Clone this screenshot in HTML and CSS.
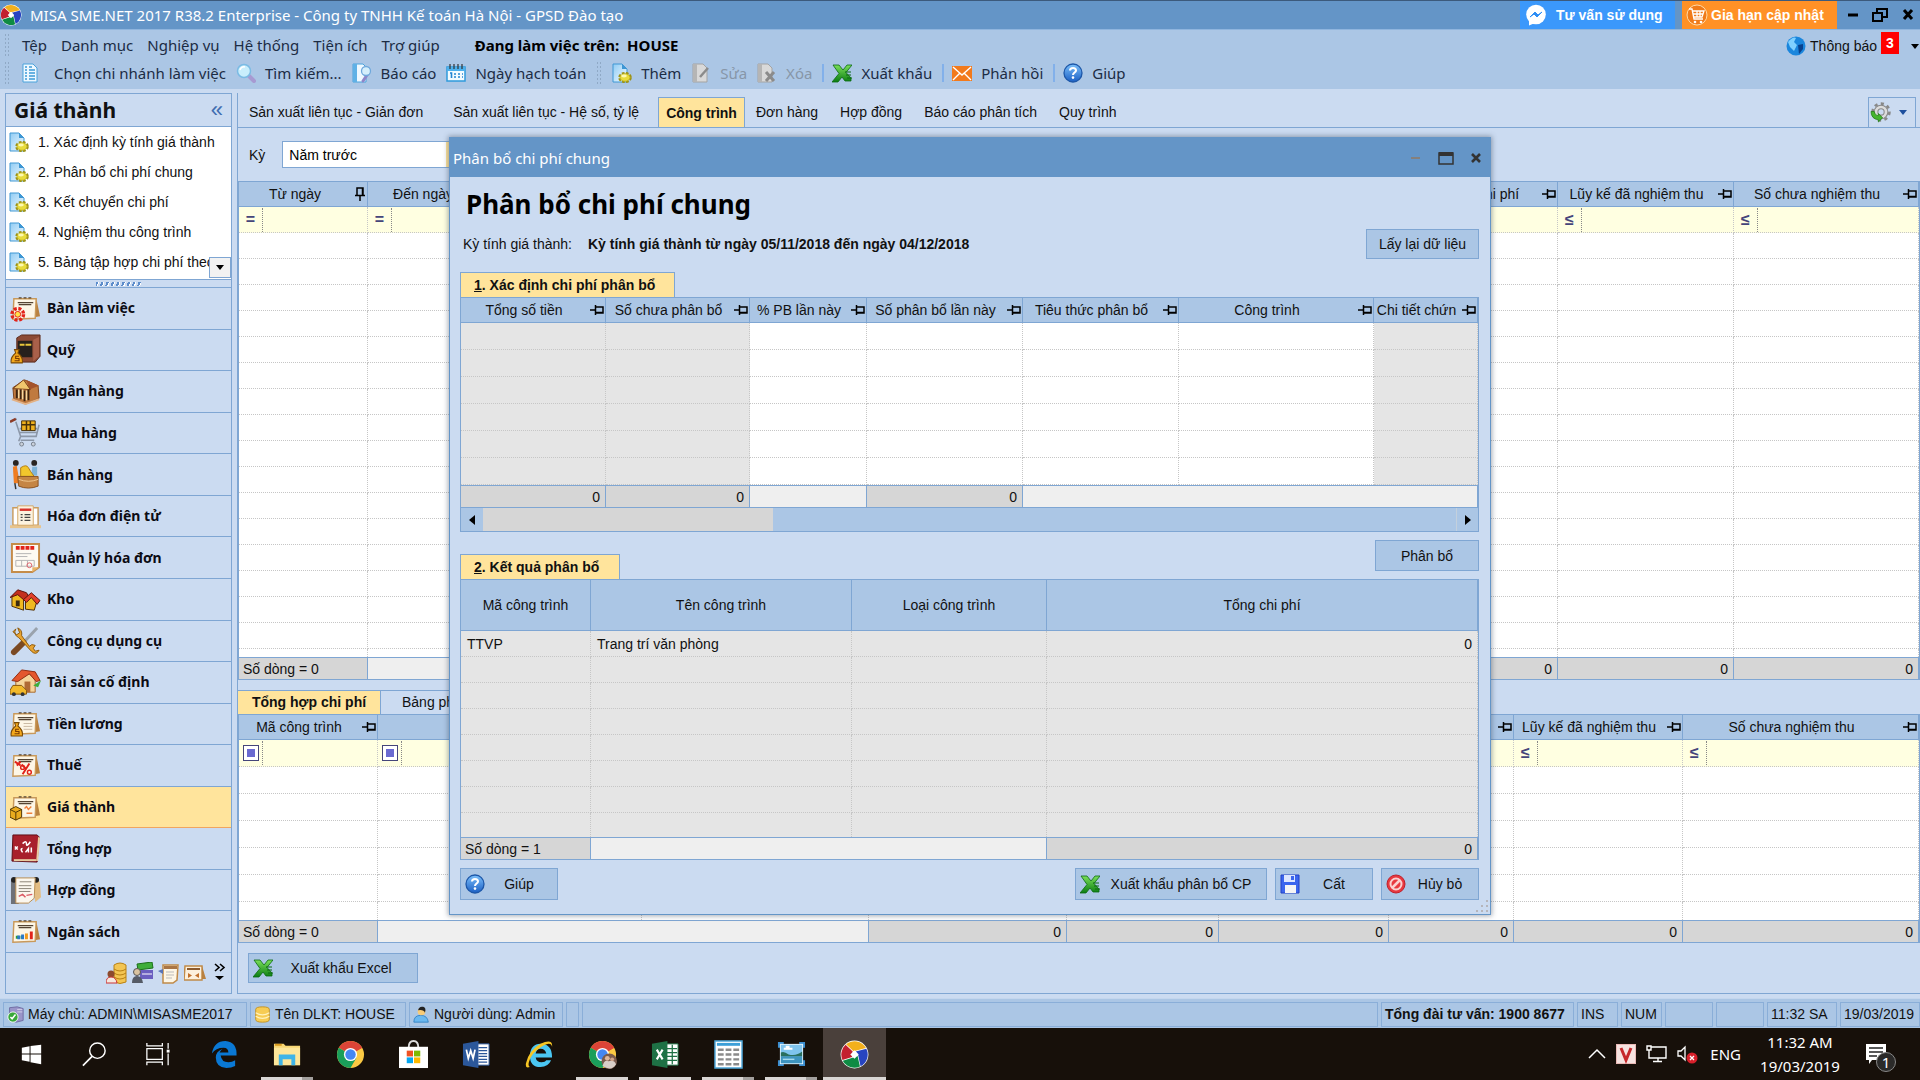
FILE: index.html
```html
<!DOCTYPE html>
<html lang="vi">
<head>
<meta charset="utf-8">
<title>MISA SME.NET 2017</title>
<link rel="stylesheet" href="styles.css">
</head>
<body>
<svg class="defs" aria-hidden="true">
  <defs>
    <linearGradient id="gGreen" x1="0" y1="0" x2="0" y2="1"><stop offset="0" stop-color="#7be05a"/><stop offset="1" stop-color="#0a7d12"/></linearGradient>
    <linearGradient id="gBlue" x1="0" y1="0" x2="0" y2="1"><stop offset="0" stop-color="#7cc0fb"/><stop offset="1" stop-color="#1b5fc4"/></linearGradient>
    <linearGradient id="gPage" x1="0" y1="0" x2="1" y2="1"><stop offset="0" stop-color="#8fcbf4"/><stop offset="1" stop-color="#f4fbff"/></linearGradient>
  </defs>
  <symbol id="pin" viewBox="0 0 14 12"><path d="M0 6h5M5.5 1v10M6 3h7v6H6M6 8.5h7" fill="none" stroke="#000" stroke-width="1.5"/></symbol>
  <symbol id="pin-down" viewBox="0 0 12 14"><path d="M3 8V1h6v7M8.500 1v7M1 8.500h10M6 9v5" fill="none" stroke="#000" stroke-width="1.500"/></symbol>
  <symbol id="misa" viewBox="0 0 24 24"><circle cx="12" cy="12" r="11.500" fill="#fff"/><path d="M2.500 6.500A11 11 0 0 1 18 2.800L20 10 12 8.500 9 12Z" fill="none"/><path d="M5 3.600A11 11 0 0 1 21.500 6.700L12 9 11 9Z" fill="#f3b01c"/><path d="M21.800 7.200A11 11 0 0 1 17 21.800L15 12.500 13 9.500Z" fill="#2744c0"/><path d="M16.500 22A11 11 0 0 1 2.300 17.200L11 14.500 14.500 13Z" fill="#0e8b43"/><path d="M2 16.500A11 11 0 0 1 4.600 4L10.500 9.500 10 14Z" fill="#c3202f"/><path d="M12 8.500l3.500 3.500-3.500 3.500L8.500 12Z" fill="#fff"/></symbol>
  <symbol id="doc-list" viewBox="0 0 20 20"><path d="M3 1h10l4 4v14H3Z" fill="#eef8ff" stroke="#4aa3dc"/><path d="M5 4h2M5 7h2M5 10h2M5 13h2M5 16h2M9 4h3M9 7h6M9 10h6M9 13h6M9 16h6" stroke="#3d9ad8" stroke-width="1.300"/></symbol>
  <symbol id="find" viewBox="0 0 20 20"><path d="M13 13l5 5" stroke="#a79ad2" stroke-width="4" stroke-linecap="round"/><circle cx="8" cy="8" r="6.500" fill="#c9eefc" stroke="#7bbbe4" stroke-width="1.500"/><path d="M4 7a4 4 0 0 1 5-3" stroke="#fff" stroke-width="1.500" fill="none"/></symbol>
  <symbol id="report" viewBox="0 0 20 20"><path d="M1 1h10l3 3v15H1Z" fill="#eef8ff" stroke="#4aa3dc"/><path d="M1 1h4v18H1Z" fill="#5fb1e6"/><path d="M15 12l-4 6" stroke="#8f86c9" stroke-width="3" stroke-linecap="round"/><circle cx="14" cy="8" r="4.500" fill="#d5effb" stroke="#6fa8dc" stroke-width="1.300"/></symbol>
  <symbol id="cal" viewBox="0 0 20 20"><path d="M1 4h18v14H1Z" fill="#f2fbff" stroke="#2f9bdc" stroke-width="1.500"/><path d="M1 4h18v4H1Z" fill="#4db0ec"/><path d="M4 1v5M8 1v5M12 1v5M16 1v5" stroke="#333" stroke-width="1.200"/><path d="M4 10h1.500v5M8 11h2M12 11h2M16 11h1M8 14h2M12 14h2M16 14h1" stroke="#2386d2" stroke-width="1.600" fill="none"/></symbol>
  <symbol id="doc-new" viewBox="0 0 20 20"><path d="M1 1h9l5 5v13H1Z" fill="url(#gPage)" stroke="#3f97d4"/><path d="M10 1v5h5Z" fill="#3f97d4"/><ellipse cx="13" cy="14.500" rx="5.500" ry="4.300" fill="none" stroke="#9c9114" stroke-width="2.600" stroke-dasharray="2.600 1.300"/><ellipse cx="13" cy="14.500" rx="5" ry="3.800" fill="#e8dc3c" stroke="#b8ab1f" stroke-width=".8"/><ellipse cx="12" cy="13" rx="2.800" ry="1.400" fill="#fdf9b0"/></symbol>
  <symbol id="doc-edit" viewBox="0 0 20 20"><path d="M2 1h10l4 4v14H2Z" fill="#d9d9d9" stroke="#a3a3a3"/><path d="M2 1h4v18H2Z" fill="#b5b5b5"/><path d="M9 14l8-9" stroke="#8b8b8b" stroke-width="2.500"/></symbol>
  <symbol id="doc-del" viewBox="0 0 20 20"><path d="M1 1h10l4 4v14H1Z" fill="#d9d9d9" stroke="#a3a3a3"/><path d="M1 1h4v18H1Z" fill="#b5b5b5"/><path d="M9 9l8 9M17 9l-8 9" stroke="#8b8b8b" stroke-width="3"/></symbol>
  <symbol id="xls" viewBox="0 0 20 20"><path d="M1 2h6l4 5 4-5h5l-6 7.500L19 15v3h-6l-3-4-4 5H0l7-8.500Z" fill="url(#gGreen)" stroke="#0b6a12" stroke-width=".8"/><path d="M13 9h6M14 12h5M15 15h5" stroke="#0b6a12"/></symbol>
  <symbol id="mail" viewBox="0 0 20 20"><path d="M0 3h20v15H0Z" fill="#f27a1c"/><path d="M1 4l9 8 9-8M1 17l7-7M19 17l-7-7" stroke="#fff" stroke-width="1.400" fill="none"/></symbol>
  <symbol id="help" viewBox="0 0 20 20"><circle cx="10" cy="10" r="9" fill="url(#gBlue)" stroke="#1d57a8" stroke-width="1.300"/><path d="M7 7.500C7 4 13 4 13 7.500c0 2-3 2.200-3 4.500" fill="none" stroke="#fff" stroke-width="2"/><circle cx="10" cy="14.600" r="1.300" fill="#fff"/></symbol>
  <symbol id="globe" viewBox="0 0 20 20"><circle cx="10" cy="10" r="9.500" fill="#1a86dd"/><path d="M2 6q5-6 8-4l-2 4 3 3-3 6-4-4Z" fill="#7fd0ff"/><path d="M12 9l5-1v5l-4 5Z" fill="#08428e"/></symbol>
  <symbol id="gear" viewBox="0 0 20 20"><circle cx="10.500" cy="9.500" r="6.500" fill="#dcdcdc" stroke="#888" stroke-width="1"/><circle cx="10.500" cy="9.500" r="8" fill="none" stroke="#888" stroke-width="2.500" stroke-dasharray="3 3.200"/><circle cx="10.500" cy="9.500" r="3" fill="#cbdbf1" stroke="#888"/><path d="M1 9q0 7 7 8v2l4-4-4-4v2q-3 0-4-4Z" fill="#45b52f" stroke="#217b14" stroke-width=".7"/></symbol>
  <symbol id="save" viewBox="0 0 20 20"><path d="M1 1h18v18H1Z" fill="#3c66ee" stroke="#2340c4"/><path d="M4 1h11v7H4Z" fill="#dde6ff"/><path d="M11 2h3v4h-3Z" fill="#3c66ee"/><path d="M5 11h11v8H5Z" fill="#f5f5f5"/></symbol>
  <symbol id="deny" viewBox="0 0 20 20"><circle cx="10" cy="10" r="9" fill="#e8383f" stroke="#c01f2a"/><circle cx="10" cy="10" r="5.500" fill="none" stroke="#fbd0d0" stroke-width="2"/><path d="M6 14l8-8" stroke="#fbd0d0" stroke-width="2.500"/></symbol>
  <symbol id="messenger" viewBox="0 0 22 22"><path d="M4 15v6.500L10 19Z" fill="#fff"/><circle cx="11" cy="10.500" r="9.800" fill="#fff"/><path d="M5 13l5-5 3 3 4-3-5 5-3-3Z" fill="#2c8df5" stroke="#2c8df5"/></symbol>
  <symbol id="cart" viewBox="0 0 22 22"><circle cx="11" cy="11" r="10" fill="#f07b1a" stroke="#ffd9a8"/><path d="M3 5h3l2 10h9M7 7h11l-2 6H8M11 7v6M14 7v6M7 10h10" fill="none" stroke="#fff" stroke-width="1.300"/><circle cx="9" cy="18" r="1.300" fill="#fff"/><circle cx="15" cy="18" r="1.300" fill="#fff"/></symbol>
  <!-- desk-calendar card shared by several modules -->
  <symbol id="card" viewBox="0 0 32 32"><path d="M27 5l4 19-6 1Z" fill="#b9813f"/><path d="M4 6h23l-1 20-23 1Z" fill="#fdf6e6" stroke="#c9995a" stroke-width="1.500"/><path d="M9 5h3M14 5h3M19 5h3M8 10h16M9 12h13" stroke="#554433" stroke-width="1.300"/></symbol>
  <symbol id="bag" viewBox="0 0 12 14"><path d="M4 1h4l-1 3q5 4 4 9H1q-1-5 4-9Z" fill="#f3a81c" stroke="#7a4a06"/><path d="M8 7H5v2h3v2H4" fill="none" stroke="#7a3c04"/></symbol>
  <symbol id="m-desk" viewBox="0 0 32 32"><use href="#card"/><circle cx="8" cy="22" r="6" fill="none" stroke="#e2231a" stroke-width="3.500" stroke-dasharray="3 1.700"/><circle cx="8" cy="22" r="3" fill="#ffe14a" stroke="#e2231a"/></symbol>
  <symbol id="m-fund" viewBox="0 0 32 32"><path d="M7 4l5-3h19v22l-5 6H7Z" fill="#8c4a35" stroke="#5b2a1c"/><path d="M8 7h15v17H8Z" fill="#26201c"/><path d="M10 11h5M16 11h6" stroke="#e7c53a" stroke-width="2"/><path d="M24 6l6-3v20l-6 5Z" fill="#a9604a"/><use href="#bag" x="0" y="15" width="14" height="16"/></symbol>
  <symbol id="m-bank" viewBox="0 0 32 32"><path d="M3 12L15 4l14 6 1 13-14 6-12-5Z" fill="#c07a3f" stroke="#7d431b"/><path d="M17 4l13 6-10 4Z" fill="#a4532b"/><path d="M3 13l11-9 7 10Z" fill="#f0c66d" stroke="#7d431b"/><path d="M7 14v9M11 14v10M15 15v11M19 14v11" stroke="#3b2412" stroke-width="2"/><path d="M9 14v9M13 14v10M17 15v10" stroke="#f6d9a0" stroke-width="1.500"/><path d="M2 24l14 5 14-5" stroke="#e3b184" stroke-width="2" fill="none"/></symbol>
  <symbol id="m-buy" viewBox="0 0 32 32"><path d="M1 4l6-2M6 5l5 15h16l3-12M10 12h18M10 16h18M11 24h14M11 20l-2 5" stroke="#8b97a8" stroke-width="1.600" fill="none"/><path d="M12 4h14v10H12Z" fill="#efb11c" stroke="#4a3208"/><path d="M17 4v10M21 4v10M12 8h14" stroke="#4a3208" stroke-width="1.500"/><circle cx="12" cy="28" r="2" fill="#c9d0da" stroke="#77808c"/><circle cx="24" cy="28" r="2" fill="#c9d0da" stroke="#77808c"/><path d="M0 5l6-3" stroke="#8c3b26" stroke-width="2.500"/></symbol>
  <symbol id="m-sell" viewBox="0 0 32 32"><path d="M3 8l4-1 3 18H4Z" fill="#ef7d22"/><circle cx="6" cy="4" r="3" fill="#2a2522"/><circle cx="25" cy="4" r="3" fill="#2a2522"/><path d="M23 8h5v9h-6Z" fill="#7fb3d8"/><path d="M11 9q6-4 8 0t6 9H11Z" fill="#f2c62c" stroke="#b47d12"/><path d="M8 18h21v10q-10 4-20 0Z" fill="#c58544" stroke="#8a5322"/><path d="M9 21q10 4 20 0" stroke="#f0c78e" fill="none"/><path d="M5 25l1 6" stroke="#333" stroke-width="1.500"/></symbol>
  <symbol id="m-einv" viewBox="0 0 32 32"><path d="M3 7h26v18H3Z" fill="#fff" stroke="#c99c5f" stroke-width="1.500"/><path d="M0 25h32v3H0Z" fill="#e8c48c"/><path d="M8 5h16v20H8Z" fill="#fcf2df" stroke="#d3a869"/><path d="M10 9h12" stroke="#d8332b" stroke-width="2.500"/><path d="M11 14h2M15 14h6M11 17h2M15 17h6M11 20h2M15 20h6" stroke="#444" stroke-width="1.300"/></symbol>
  <symbol id="m-inv" viewBox="0 0 32 32"><path d="M2 2h28v24l-7 5H2Z" fill="#fdfaf2" stroke="#c58c49" stroke-width="2"/><path d="M6 6h20" stroke="#e2231a" stroke-width="4" stroke-dasharray="4 1"/><path d="M6 12h16M6 15h12M6 19h19v6H6ZM12 19v6M18 19v6" stroke="#b4b4b4" fill="none"/><path d="M23 31v-5h7Z" fill="#e8b368"/><circle cx="20" cy="24" r="2.500" fill="none" stroke="#e0606b"/></symbol>
  <symbol id="m-store" viewBox="0 0 32 32"><path d="M2 13v10l12 4V13L8 8Z" fill="#f0b921" stroke="#4b2b06"/><path d="M16 17v9l9 1 3-10-5-6Z" fill="#f0b921" stroke="#4b2b06"/><path d="M0 14l8-8 9 3 3 5-5 3-7-6Z" fill="#c3301f" stroke="#5b120b"/><path d="M14 16l8-7 9 8-3 4-6-7-5 5Z" fill="#e2402b" stroke="#5b120b"/><path d="M6 17h4v6H6Z" fill="#3b2a10"/></symbol>
  <symbol id="m-tool" viewBox="0 0 32 32"><path d="M28 3L14 18" stroke="#9aa3ad" stroke-width="3"/><path d="M14 18L4 28" stroke="#7b4a24" stroke-width="6" stroke-linecap="round"/><path d="M6 4q-3 6 3 9L22 27q5 5 8-1l-4 1-2-3 2-3q-4-2-6 1L12 11q1-6-4-8l2 5-3 2-4-3Z" fill="#e8a430" stroke="#8c5a10"/></symbol>
  <symbol id="m-asset" viewBox="0 0 32 32"><path d="M6 13v13h20V12L17 5Z" fill="#f6d59b" stroke="#a8682b"/><path d="M2 14L12 3l14 2 5 9-4 1-7-8L8 15Z" fill="#e4572e" stroke="#8f2a10"/><path d="M15 15h6v11h-6Z" fill="#b06a35"/><path d="M0 24l3-5h9l5 5v4H0Z" fill="#f2b92a" stroke="#84560b"/><circle cx="4" cy="28" r="2" fill="#333"/><circle cx="13" cy="28" r="2" fill="#333"/><path d="M24 19l8-5-3 7Z" fill="#3fae3a"/></symbol>
  <symbol id="m-pay" viewBox="0 0 32 32"><use href="#card"/><path d="M14 16h9M14 19h9M14 22h9" stroke="#c9b9a2"/><use href="#bag" x="0" y="14" width="14" height="16"/></symbol>
  <symbol id="m-tax" viewBox="0 0 32 32"><use href="#card"/><path d="M5 12l6 4M11 12l-4 4M12 15l4 4M20 14l-7 11" stroke="#e2231a" stroke-width="2"/><circle cx="13" cy="18" r="2" fill="none" stroke="#e2231a" stroke-width="1.500"/><circle cx="20" cy="23" r="2" fill="none" stroke="#e2231a" stroke-width="1.500"/></symbol>
  <symbol id="m-cost" viewBox="0 0 32 32"><use href="#card"/><path d="M15 17l2-2 2 3 3-3M17 22h6" stroke="#f0803c" fill="none" stroke-width="1.500"/><path d="M0 18l6-3 6 3v8l-6 3-6-3Z" fill="#e9ab1e" stroke="#4c3405"/><path d="M0 18l6 3 6-3M6 21v8" stroke="#4c3405" fill="none"/></symbol>
  <symbol id="m-ledger" viewBox="0 0 32 32"><path d="M3 2h25l2 2-2 26-26-1Z" fill="#a8202c" stroke="#5d0d14"/><path d="M29 4l2 1-2 24h-2Z" fill="#e9cba0"/><path d="M4 28h23" stroke="#e9cba0" stroke-width="2"/><path d="M13 11q4-4 4 0t4-2M13 20q-3-4 0-4M16 20l3-4v4M22 15v5M5 14l3 3M8 14l-3 3" stroke="#fff" stroke-width="1.600" fill="none"/></symbol>
  <symbol id="m-contract" viewBox="0 0 32 32"><path d="M1 6q4-5 8 0v24H1Z" fill="#6e7177"/><path d="M24 4q6-1 7 5l1 14-6 5Z" fill="#e3bd84"/><circle cx="4" cy="5" r="3" fill="#222"/><circle cx="27" cy="5" r="3" fill="#222"/><path d="M6 3h20l-1 21-6 5H6Z" fill="#fbf7ee" stroke="#b88b50"/><path d="M10 7h12M9 11h13M9 14h13M9 17h12" stroke="#8a8377"/><path d="M9 22l4-2 3 3M17 21l6-1" stroke="#db5a63" stroke-width="1.500" fill="none"/></symbol>
  <symbol id="m-budget" viewBox="0 0 32 32"><use href="#card"/><path d="M6 22h3M11 22h3" stroke="#2d9e3b" stroke-width="3"/><path d="M9 24v-4M13 24v-5" stroke="#2a79c8" stroke-width="3"/><path d="M17 24v-6" stroke="#f09a1e" stroke-width="3"/><path d="M22 24v-8" stroke="#e2231a" stroke-width="3"/></symbol>
  <symbol id="s-coins" viewBox="0 0 22 22"><path d="M8 3q6-4 12 0v17q-6 3-12 0Z" fill="#f3c552" stroke="#b98114"/><path d="M8 7q6 4 12 0M8 11q6 4 12 0M8 15q6 4 12 0" stroke="#b98114" fill="none"/><circle cx="5" cy="12" r="3.500" fill="#8d4a2d"/><path d="M0 21q0-6 5-6t6 6Z" fill="#f4e9e0" stroke="#c33"/></symbol>
  <symbol id="s-cash" viewBox="0 0 22 22"><path d="M5 2l15-2 1 6-15 2Z" fill="#3fae3a" stroke="#1d6f1a"/><path d="M8 8h13v9H8Z" fill="#6a5fc0"/><path d="M10 12h10" stroke="#fff"/><circle cx="5" cy="10" r="3.500" fill="#d9c3a0" stroke="#555"/><path d="M0 21q0-7 5-7t6 7Z" fill="#555b66"/></symbol>
  <symbol id="s-note" viewBox="0 0 22 22"><path d="M5 3h15l-1 15-4 3H5Z" fill="#fdf6e6" stroke="#c08a48" stroke-width="1.500"/><path d="M6 4h13v3H6Z" fill="#a97545"/><path d="M0 9l5-2v5Z" fill="#5874b8"/><path d="M8 10h8M8 13h8M8 16h6" stroke="#bbb"/></symbol>
  <symbol id="s-card" viewBox="0 0 22 22"><path d="M1 4h17v14H0Z" fill="#fdf0dc" stroke="#c08a48" stroke-width="1.500"/><path d="M18 4l4 13h-4Z" fill="#b9813f"/><path d="M3 7h13" stroke="#8d5a2c" stroke-width="2"/><path d="M4 11v5l4-2.500ZM15 11v5l-4-2.500Z" fill="#c2702b"/></symbol>
  <symbol id="server" viewBox="0 0 20 20"><path d="M3 2l9-1 7 2v14l-8 2-8-2Z" fill="#9a95c9" stroke="#6a659d"/><path d="M12 4h6M12 7h6" stroke="#dcdaf0"/><circle cx="7" cy="13" r="6" fill="#38a838" stroke="#fff"/><path d="M4 13l2 2 4-5" stroke="#fff" stroke-width="1.800" fill="none"/></symbol>
  <symbol id="db" viewBox="0 0 20 20"><path d="M2 4q0-3 8-3t8 3v12q0 3-8 3t-8-3Z" fill="#f7cc54" stroke="#c08d18"/><path d="M2 8q8 5 16 0M2 12q8 5 16 0" stroke="#fff3c0" stroke-width="1.300" fill="none"/></symbol>
  <symbol id="user" viewBox="0 0 20 20"><path d="M1 19q0-8 8-8t9 8Z" fill="#6ab8f0" stroke="#2f7fc0"/><circle cx="10" cy="6.500" r="4.500" fill="#f7cb78"/><path d="M6 5q1-5 6-4 4 1 2 7-1-4-8-3Z" fill="#222"/></symbol>
  <symbol id="chrome" viewBox="0 0 30 30"><circle cx="15" cy="15" r="14" fill="#fbc943"/><path d="M15 15L2.900 8A14 14 0 0 1 27.100 8Z" fill="#dc4437"/><path d="M27.100 8H15v7Z" fill="#dc4437"/><path d="M2.900 8A14 14 0 0 0 15 29l6-10.500L15 15Z" fill="#1a9f5b"/><circle cx="15" cy="15" r="6.800" fill="#fff"/><circle cx="15" cy="15" r="5.400" fill="#4587f3"/></symbol>
</svg>

<div class="app">
  <header class="titlebar">
    <svg class="logo"><use href="#misa"/></svg>
    <h1 class="app-title">MISA SME.NET 2017 R38.2 Enterprise - Công ty TNHH Kế toán Hà Nội - GPSD Đào tạo</h1>
    <button class="promo promo-chat"><svg class="i22"><use href="#messenger"/></svg><span>Tư vấn sử dụng</span></button>
    <button class="promo promo-renew"><svg class="i22"><use href="#cart"/></svg><span>Gia hạn cập nhật</span></button>
    <div class="win-ctl">
      <button aria-label="Thu nhỏ"><svg width="12" height="16"><path d="M1 8h10" stroke="#000" stroke-width="3"/></svg></button>
      <button aria-label="Khôi phục"><svg width="16" height="16"><path d="M5 5V2h10v8h-4M1 6h9v8H1Z" fill="none" stroke="#000" stroke-width="2"/></svg></button>
      <button aria-label="Đóng"><svg width="14" height="16"><path d="M3 3l8 9M11 3l-8 9" stroke="#000" stroke-width="3"/></svg></button>
    </div>
  </header>

  <div class="bars">
    <div class="bars-main">
      <nav class="menubar">
        <i class="grip"></i>
        <a href="#">Tệp</a><a href="#">Danh mục</a><a href="#">Nghiệp vụ</a><a href="#">Hệ thống</a><a href="#">Tiện ích</a><a href="#">Trợ giúp</a>
        <b class="branch">Đang làm việc trên:&nbsp; HOUSE</b>
      </nav>
      <div class="toolbar">
        <i class="grip"></i>
        <button class="tool wide"><svg><use href="#doc-list"/></svg>Chọn chi nhánh làm việc</button>
        <button class="tool"><svg><use href="#find"/></svg>Tìm kiếm...</button>
        <button class="tool"><svg><use href="#report"/></svg>Báo cáo</button>
        <button class="tool"><svg><use href="#cal"/></svg>Ngày hạch toán</button>
        <i class="grip"></i>
        <button class="tool"><svg><use href="#doc-new"/></svg>Thêm</button>
        <button class="tool" disabled><svg><use href="#doc-edit"/></svg>Sửa</button>
        <button class="tool" disabled><svg><use href="#doc-del"/></svg>Xóa</button>
        <i class="sep"></i>
        <button class="tool"><svg><use href="#xls"/></svg>Xuất khẩu</button>
        <i class="sep"></i>
        <button class="tool"><svg><use href="#mail"/></svg>Phản hồi</button>
        <i class="sep"></i>
        <button class="tool"><svg><use href="#help"/></svg>Giúp</button>
      </div>
    </div>
    <button class="notice"><svg><use href="#globe"/></svg><span>Thông báo</span><b>3</b><i class="caret"></i></button>
  </div>

  <div class="workspace">
    <aside class="sidebar">
      <div class="side-head"><h2>Giá thành</h2><button aria-label="Thu gọn">«</button></div>
      <ul class="steps">
        <li><svg><use href="#doc-new"/></svg><a href="#">1. Xác định kỳ tính giá thành</a></li>
        <li><svg><use href="#doc-new"/></svg><a href="#">2. Phân bổ chi phí chung</a></li>
        <li><svg><use href="#doc-new"/></svg><a href="#">3. Kết chuyển chi phí</a></li>
        <li><svg><use href="#doc-new"/></svg><a href="#">4. Nghiệm thu công trình</a></li>
        <li><svg><use href="#doc-new"/></svg><a href="#">5. Bảng tập hợp chi phí theo</a><button class="more" aria-label="Cuộn xuống"><i class="caret"></i></button></li>
      </ul>
      <div class="splitter"><i></i></div>
      <nav class="modules">
        <a href="#"><svg><use href="#m-desk"/></svg>Bàn làm việc</a>
        <a href="#"><svg><use href="#m-fund"/></svg>Quỹ</a>
        <a href="#"><svg><use href="#m-bank"/></svg>Ngân hàng</a>
        <a href="#"><svg><use href="#m-buy"/></svg>Mua hàng</a>
        <a href="#"><svg><use href="#m-sell"/></svg>Bán hàng</a>
        <a href="#"><svg><use href="#m-einv"/></svg>Hóa đơn điện tử</a>
        <a href="#"><svg><use href="#m-inv"/></svg>Quản lý hóa đơn</a>
        <a href="#"><svg><use href="#m-store"/></svg>Kho</a>
        <a href="#"><svg><use href="#m-tool"/></svg>Công cụ dụng cụ</a>
        <a href="#"><svg><use href="#m-asset"/></svg>Tài sản cố định</a>
        <a href="#"><svg><use href="#m-pay"/></svg>Tiền lương</a>
        <a href="#"><svg><use href="#m-tax"/></svg>Thuế</a>
        <a href="#" class="on"><svg><use href="#m-cost"/></svg>Giá thành</a>
        <a href="#"><svg><use href="#m-ledger"/></svg>Tổng hợp</a>
        <a href="#"><svg><use href="#m-contract"/></svg>Hợp đồng</a>
        <a href="#"><svg><use href="#m-budget"/></svg>Ngân sách</a>
      </nav>
      <div class="side-foot">
        <svg class="i22"><use href="#s-coins"/></svg><svg class="i22"><use href="#s-cash"/></svg><svg class="i22"><use href="#s-note"/></svg><svg class="i22"><use href="#s-card"/></svg>
        <button aria-label="Thêm phân hệ"><svg width="12" height="20" viewBox="0 0 12 20"><path d="M1 1l4 3.500L1 8M6 1l4 3.500L6 8" fill="none" stroke="#000" stroke-width="1.600"/><path d="M1 13h9l-4.500 4Z"/></svg></button>
      </div>
    </aside>

    <main class="main">
      <div class="tabs">
        <a href="#">Sản xuất liên tục - Giản đơn</a>
        <a href="#">Sản xuất liên tục - Hệ số, tỷ lệ</a>
        <a href="#" class="on">Công trình</a>
        <a href="#">Đơn hàng</a>
        <a href="#">Hợp đồng</a>
        <a href="#">Báo cáo phân tích</a>
        <a href="#">Quy trình</a>
        <button class="gear" aria-label="Tùy chọn"><svg><use href="#gear"/></svg><i class="caret"></i></button>
      </div>
      <div class="period"><label for="ky">Kỳ</label><select id="ky"><option>Năm trước</option></select></div>

      <table class="grid upper">
        <colgroup><col class="w129"><col class="w129"><col><col class="w145"><col class="w176"><col class="w185"></colgroup>
        <thead>
          <tr><th><div><span>Từ ngày</span><svg class="down"><use href="#pin-down"/></svg></div></th><th><div><span>Đến ngày</span><svg><use href="#pin"/></svg></div></th><th></th><th><div><span>Lũy kế chi phí</span><svg><use href="#pin"/></svg></div></th><th><div><span>Lũy kế đã nghiệm thu</span><svg><use href="#pin"/></svg></div></th><th><div><span>Số chưa nghiệm thu</span><svg><use href="#pin"/></svg></div></th></tr>
          <tr class="filter"><td><i>=</i></td><td><i>=</i></td><td></td><td><i>≤</i></td><td><i>≤</i></td><td><i>≤</i></td></tr>
        </thead>
        <tbody>
          <tr><td><td><td><td><td><td></tr><tr><td><td><td><td><td><td></tr><tr><td><td><td><td><td><td></tr><tr><td><td><td><td><td><td></tr>
          <tr><td><td><td><td><td><td></tr><tr><td><td><td><td><td><td></tr><tr><td><td><td><td><td><td></tr><tr><td><td><td><td><td><td></tr>
          <tr><td><td><td><td><td><td></tr><tr><td><td><td><td><td><td></tr><tr><td><td><td><td><td><td></tr><tr><td><td><td><td><td><td></tr>
          <tr><td><td><td><td><td><td></tr><tr><td><td><td><td><td><td></tr><tr><td><td><td><td><td><td></tr><tr><td><td><td><td><td><td></tr>
          <tr class="rest"><td><td><td><td><td><td></tr>
        </tbody>
        <tfoot><tr><td class="count">Số dòng = 0</td><td colspan="2"></td><td class="sum">0</td><td class="sum">0</td><td class="sum">0</td></tr></tfoot>
      </table>

      <div class="tabs2"><a href="#" class="on">Tổng hợp chi phí</a><a href="#">Bảng phân bổ chi phí</a></div>
      <table class="grid lower">
        <colgroup><col class="w139"><col><col class="w227"><col class="w198"><col class="w152"><col class="w170"><col class="w125"><col class="w169"><col class="w236"></colgroup>
        <thead>
          <tr><th><div><span>Mã công trình</span><svg><use href="#pin"/></svg></div></th><th></th><th></th><th></th><th></th><th></th><th><div><span></span><svg><use href="#pin"/></svg></div></th><th><div><span>Lũy kế đã nghiệm thu</span><svg><use href="#pin"/></svg></div></th><th><div><span>Số chưa nghiệm thu</span><svg><use href="#pin"/></svg></div></th></tr>
          <tr class="filter"><td><i><b class="box"></b></i></td><td><i><b class="box"></b></i></td><td></td><td></td><td></td><td></td><td></td><td><i>≤</i></td><td><i>≤</i></td></tr>
        </thead>
        <tbody>
          <tr><td><td><td><td><td><td><td><td><td></tr><tr><td><td><td><td><td><td><td><td><td></tr><tr><td><td><td><td><td><td><td><td><td></tr>
          <tr><td><td><td><td><td><td><td><td><td></tr><tr><td><td><td><td><td><td><td><td><td></tr>
          <tr class="rest"><td><td><td><td><td><td><td><td><td></tr>
        </tbody>
        <tfoot><tr><td class="count">Số dòng = 0</td><td colspan="2"></td><td class="sum">0</td><td class="sum">0</td><td class="sum">0</td><td class="sum">0</td><td class="sum">0</td><td class="sum">0</td></tr></tfoot>
      </table>
      <div class="actions"><button class="btn excel"><svg><use href="#xls"/></svg><span>Xuất khẩu Excel</span></button></div>
    </main>
  </div>

  <footer class="status">
    <span class="st-server"><svg><use href="#server"/></svg>Máy chủ: ADMIN\MISASME2017</span>
    <span class="st-db"><svg><use href="#db"/></svg>Tên DLKT: HOUSE</span>
    <span class="st-user"><svg><use href="#user"/></svg>Người dùng: Admin</span>
    <span class="st-mini"></span>
    <span class="st-fill"></span>
    <span class="st-hot"><b>Tổng đài tư vấn: 1900 8677</b></span>
    <span class="st-ins">INS</span>
    <span class="st-ins">NUM</span>
    <span class="st-gap"></span>
    <span class="st-gap"></span>
    <span class="st-time">11:32 SA</span>
    <span class="st-date">19/03/2019</span>
  </footer>

  <div class="taskbar">
    <div class="tb-sys">
      <button aria-label="Start"><svg viewBox="0 0 30 30"><path d="M5 8l8-1.500V14H5ZM14 6.300L25 5v9H14ZM5 15h8v7.500L5 21ZM14 15h11v10L14 23Z" fill="#fff"/></svg></button>
      <button aria-label="Tìm kiếm"><svg viewBox="0 0 30 30"><circle cx="18" cy="11" r="8" fill="none" stroke="#fff" stroke-width="1.500"/><path d="M12.500 17L3 26.500" stroke="#fff" stroke-width="1.700"/></svg></button>
      <button aria-label="Task view"><svg viewBox="0 0 30 30"><path d="M4 3v3h16V3M4 9h16v11H4ZM4 26v-3h16v3M26 3v6M26 14v12" fill="none" stroke="#fff" stroke-width="1.300"/><path d="M24.500 10h3v3h-3Z" fill="#fff"/></svg></button>
    </div>
    <div class="tb-apps">
      <button aria-label="Edge"><svg viewBox="0 0 30 30"><path d="M2 14Q4 1 16 1q12 1 11.500 15H11q1 7 8 7 4 0 7-2v6q-4 2-9 2Q6 28 6 18q0-6 7-9-3 3-3 4h9q0-5-5-5Q6 8 2 14Z" fill="#0a78d4"/></svg></button>
      <button class="run multi" aria-label="Explorer"><svg viewBox="0 0 30 30"><path d="M1 4h10l2 2h15v20H1Z" fill="#f8d775"/><path d="M1 8h27v18H1Z" fill="#fde69a"/><path d="M6 26V15h17v11h-4v-6h-9v6Z" fill="#3eb4e8"/><path d="M2 5h7" stroke="#d99a1f" stroke-width="2"/></svg></button>
      <button aria-label="Chrome"><svg viewBox="0 0 30 30"><use href="#chrome"/></svg></button>
      <button aria-label="Store"><svg viewBox="0 0 30 30"><path d="M10 8q0-7 5-7t5 7" fill="none" stroke="#ddd" stroke-width="2"/><path d="M0 7h30v22H0Z" fill="#fff"/><path d="M8 11h6.500v6H8Z" fill="#f05223"/><path d="M15.500 11H22v6h-6.500Z" fill="#7fba00"/><path d="M8 18h6.500v6H8Z" fill="#05a6f0"/><path d="M15.500 18H22v6h-6.500Z" fill="#fdb900"/></svg></button>
      <button aria-label="Word"><svg viewBox="0 0 30 30"><path d="M15 4h13v22H15Z" fill="#fff" stroke="#2b579a"/><path d="M17 8h9M17 11h9M17 14h9M17 17h9M17 20h9M17 23h9" stroke="#2b579a" stroke-width="1.300"/><path d="M1 4l16-3v28L1 26Z" fill="#2b579a"/><path d="M4.500 10l2 9 2.500-8 2.500 8 2-9" fill="none" stroke="#fff" stroke-width="1.800"/></svg></button>
      <button aria-label="Internet Explorer"><svg viewBox="0 0 30 30"><path d="M16 4q12 0 12 14H11q1 5 6 5 4 0 5-2h5q-3 7-11 7Q5 28 5 16 6 4 16 4ZM11 14h11q-1-5-6-5-4 0-5 5Z" fill="#4bc7f3"/><path d="M5 28q-5 2-4-4Q4 11 16 4q13-6 12 3-1-6-11 0Q6 14 4 23q-1 4 1 5Z" fill="#f7c624"/></svg></button>
      <button class="run" aria-label="Chrome hồ sơ"><svg viewBox="0 0 30 30"><use href="#chrome"/><circle cx="22" cy="22" r="8" fill="#7a5b4d"/><path d="M15 27q2-7 6-5 6-2 8 3-5 8-14 2Z" fill="#d9cfc8"/><circle cx="20" cy="19" r="2.500" fill="#e0b79c"/><circle cx="25" cy="20" r="2" fill="#d2a58a"/></svg></button>
      <button class="run" aria-label="Excel"><svg viewBox="0 0 30 30"><path d="M15 4h13v22H15Z" fill="#fff" stroke="#1e7145"/><path d="M16 9h11M16 13h11M16 17h11M16 21h11M22 5v20" stroke="#1e7145" stroke-width="1.300"/><path d="M1 4l16-3v28L1 26Z" fill="#1e7145"/><path d="M6 10l6 10M12 10L6 20" stroke="#fff" stroke-width="2.200"/></svg></button>
      <button class="run multi" aria-label="Bảng"><svg viewBox="0 0 30 30"><path d="M1 1h28v28H1Z" fill="#fff" stroke="#4ba5d8" stroke-width="1.500"/><path d="M3 3h24v3H3Z" fill="#3c9fd8"/><path d="M4 10h6M12 10h6M20 10h6M4 15h6M12 15h6M20 15h6M4 20h6M12 20h6M20 20h6M4 25h6M12 25h6M20 25h6" stroke="#8b8b8b" stroke-width="2.500"/></svg></button>
      <button class="run multi" aria-label="Ảnh"><svg viewBox="0 0 30 30"><path d="M1 2h6v6H1ZM23 2h6v6h-6ZM1 21h6v6H1ZM23 21h6v6h-6Z" fill="#3b8ed0"/><path d="M3 4h24v21H3Z" fill="#dff2fb"/><path d="M4 5h22v19H4Z" fill="#7fc4ee"/><path d="M4 13q3-2 8 2 8 2 14-3v5H4Z" fill="#2a6f5e"/><path d="M4 17h22v7H4Z" fill="#3d94bf"/><path d="M6 20h12" stroke="#a5dbef" stroke-width="1.500"/><path d="M7 9h9M9 7h4" stroke="#fff" stroke-width="2"/></svg></button>
      <button class="run active" aria-label="MISA"><svg viewBox="0 0 24 24"><use href="#misa"/></svg></button>
    </div>
    <div class="tray">
      <svg width="18" height="20"><path d="M1 14l8-8 8 8" fill="none" stroke="#fff" stroke-width="1.500"/></svg>
      <svg width="20" height="20"><path d="M0 0h20v20H0Z" fill="#e9b9b6"/><path d="M1 1h18v18H1Z" fill="#f6e3e1"/><path d="M5 4l5 12 5-12" fill="none" stroke="#c6282b" stroke-width="3"/></svg>
      <svg width="21" height="20"><path d="M5 3h15v11H3V8M12 14v3M7 17.500h9M1 2h4v4H1ZM3 6v3" fill="none" stroke="#fff" stroke-width="1.400"/></svg>
      <svg width="22" height="20"><path d="M1 7h3l4-4v13l-4-4H1Z" fill="none" stroke="#fff" stroke-width="1.300"/><circle cx="15" cy="14" r="5.500" fill="#d8202b"/><path d="M13 12l4 4M17 12l-4 4" stroke="#fff" stroke-width="1.300"/></svg>
      <span class="lang">ENG</span>
      <time class="clock"><span>11:32 AM</span><span>19/03/2019</span></time>
      <span class="action"><svg width="22" height="20"><path d="M1 0h20v16H7l-3 4v-4H1Z" fill="#fff"/><path d="M4 4h14M4 8h14M4 12h8" stroke="#222" stroke-width="1.300"/></svg><b>1</b></span>
    </div>
  </div>

  <section class="dialog" role="dialog" aria-label="Phân bổ chi phí chung">
    <div class="dlg-bar">
      <span>Phân bổ chi phí chung</span>
      <button aria-label="Thu nhỏ" disabled><svg width="12" height="16"><path d="M1 8h9" stroke="#85807c" stroke-width="2"/></svg></button>
      <button aria-label="Phóng to"><svg width="16" height="16"><path d="M1 3h14v11H1Z" fill="none" stroke="#333" stroke-width="1.500"/><path d="M1 4h14" stroke="#333" stroke-width="4"/></svg></button>
      <button aria-label="Đóng"><svg width="12" height="16"><path d="M2 4l8 8M10 4l-8 8" stroke="#333" stroke-width="2.600"/></svg></button>
    </div>
    <div class="dlg-body">
      <h2>Phân bổ chi phí chung</h2>
      <div class="dlg-info"><span>Kỳ tính giá thành:</span><b>Kỳ tính giá thành từ ngày 05/11/2018 đến ngày 04/12/2018</b><button class="btn reload">Lấy lại dữ liệu</button></div>

      <div class="dlg-tab t1"><u>1</u>. Xác định chi phí phân bổ</div>
      <table class="grid cost">
        <colgroup><col class="w145"><col class="w144"><col class="w117"><col class="w156"><col class="w156"><col><col class="w104"></colgroup>
        <thead><tr><th><div><span>Tổng số tiền</span><svg><use href="#pin"/></svg></div></th><th><div><span>Số chưa phân bổ</span><svg><use href="#pin"/></svg></div></th><th><div><span>% PB lần này</span><svg><use href="#pin"/></svg></div></th><th><div><span>Số phân bổ lần này</span><svg><use href="#pin"/></svg></div></th><th><div><span>Tiêu thức phân bổ</span><svg><use href="#pin"/></svg></div></th><th><div><span>Công trình</span><svg><use href="#pin"/></svg></div></th><th><div><span>Chi tiết chứn</span><svg><use href="#pin"/></svg></div></th></tr></thead>
        <tbody>
          <tr><td><td><td><td><td><td><td></tr><tr><td><td><td><td><td><td><td></tr><tr><td><td><td><td><td><td><td></tr>
          <tr><td><td><td><td><td><td><td></tr><tr><td><td><td><td><td><td><td></tr><tr><td><td><td><td><td><td><td></tr>
        </tbody>
        <tfoot><tr><td class="sum">0</td><td class="sum">0</td><td></td><td class="sum">0</td><td colspan="3"></td></tr></tfoot>
      </table>
      <div class="hscroll"><button aria-label="Trái"><svg width="6" height="10"><path d="M6 0v10L0 5Z"/></svg></button><i></i><button aria-label="Phải"><svg width="6" height="10"><path d="M0 0v10l6-5Z"/></svg></button></div>

      <div class="dlg-mid"><div class="dlg-tab t2"><u>2</u>. Kết quả phân bổ</div><button class="btn alloc">Phân bổ</button></div>
      <table class="grid result">
        <colgroup><col class="w130"><col class="w261"><col class="w195"><col></colgroup>
        <thead><tr><th>Mã công trình</th><th>Tên công trình</th><th>Loại công trình</th><th>Tổng chi phí</th></tr></thead>
        <tbody>
          <tr><td>TTVP</td><td>Trang trí văn phòng</td><td></td><td class="num">0</td></tr>
          <tr><td><td><td><td></tr><tr><td><td><td><td></tr><tr><td><td><td><td></tr><tr><td><td><td><td></tr><tr><td><td><td><td></tr><tr><td><td><td><td></tr>
          <tr class="rest"><td><td><td><td></tr>
        </tbody>
        <tfoot><tr><td class="count">Số dòng = 1</td><td colspan="2"></td><td class="sum">0</td></tr></tfoot>
      </table>
      <div class="dlg-foot">
        <button class="btn help"><svg><use href="#help"/></svg><span>Giúp</span></button>
        <button class="btn export"><svg><use href="#xls"/></svg><span>Xuất khẩu phân bổ CP</span></button>
        <button class="btn"><svg><use href="#save"/></svg><span>Cất</span></button>
        <button class="btn"><svg><use href="#deny"/></svg><span>Hủy bỏ</span></button>
      </div>
    </div>
    <svg class="resize" width="14" height="14"><path d="M10 0h2v2h-2ZM5 5h2v2H5ZM10 5h2v2h-2ZM0 10h2v2H0ZM5 10h2v2H5ZM10 10h2v2h-2Z" fill="#b5b5bb"/></svg>
  </section>
</div>
</body>
</html>
```
FILE: styles.css
```css
* { box-sizing: border-box; }
:root {
  --line: #7fa6d3;
  --bar: #abc6e5;
  --pane: #cbdbf1;
  --title: #6495c7;
  --gold: #ffe49c;
  --ui: "Noto Sans", "Open Sans", sans-serif;
}
body { margin: 0; font: 14px/20px "Liberation Sans", Arial, sans-serif; color: #111; background: var(--pane); }
button { font: inherit; color: inherit; background: none; border: 0; padding: 0; margin: 0; display: flex; align-items: center; }
a { color: inherit; text-decoration: none; }
h1, h2, ul { margin: 0; padding: 0; list-style: none; }
svg { display: block; flex: none; }
.defs { position: absolute; width: 0; height: 0; }
.i22 { width: 22px; height: 22px; }
.caret { border: 4px solid transparent; border-top: 5px solid #000; border-bottom: 0; }
.app { position: relative; min-height: 100vh; display: flex; flex-direction: column; }

/* title bar */
.titlebar { display: flex; align-items: center; height: 30px; background: var(--title); border-top: 1px solid #3c5a7c; border-bottom: 1px solid #8fb5de; }
.logo { width: 22px; height: 22px; margin-right: 8px; }
.app-title { flex: 1; font: 15px/20px var(--ui); color: #fff; white-space: nowrap; }
.promo { height: 28px; width: 155px; padding-left: 5px; gap: 9px; color: #fff; font-weight: bold; white-space: nowrap; }
.promo-chat { background: #3b98fb; margin-right: 7px; }
.promo-renew { background: #ff9126; padding-left: 4px; gap: 3px; }
.win-ctl { display: flex; gap: 13px; padding: 0 5px 0 10px; }

/* menu and tool rows */
.bars { display: flex; justify-content: space-between; align-items: flex-start; height: 59px; background: var(--bar); }
.menubar, .toolbar { display: flex; align-items: center; font: 15px/20px var(--ui); color: #1c2c44; white-space: nowrap; }
.menubar { height: 29px; padding-left: 4px; gap: 14px; }
.menubar .grip { margin-right: -2px; }
.branch { margin-left: 21px; color: #000; }
.toolbar { height: 28px; padding-left: 4px; gap: 10px; }
.grip { width: 6px; height: 24px; background: radial-gradient(circle, #8fa9c6 1px, transparent 1px) 0 0 / 3px 4px; }
.tool { gap: 9px; }
.tool.wide { gap: 14px; }
.tool svg { width: 20px; height: 20px; }
.tool:disabled { color: #8796a8; }
.sep { width: 2px; height: 18px; background: #82b0ea; margin-right: -2px; }
.notice { height: 32px; gap: 4px; padding-right: 1px; }
.notice svg { width: 20px; height: 20px; }
.notice b { width: 18px; height: 22px; margin: 0 8px 6px 0; background: #f00; color: #fff; line-height: 22px; text-align: center; }

/* sidebar */
.workspace { flex: 1; display: flex; gap: 5px; padding: 4px 0 4px 5px; }
.sidebar { width: 227px; display: flex; flex-direction: column; border: 1px solid var(--line); }
.side-head { height: 33px; display: flex; align-items: center; justify-content: space-between; padding: 0 8px; border-bottom: 1px solid var(--line); }
.side-head h2 { font: bold 21px/28px var(--ui); }
.side-head button { font-size: 22px; color: #3f6db0; }
.steps { height: 152px; background: #fff; overflow: hidden; }
.steps li { display: flex; align-items: center; height: 30px; gap: 9px; padding-left: 3px; white-space: nowrap; position: relative; }
.steps svg { width: 20px; height: 20px; }
.more { position: absolute; right: 0; top: 10px; width: 22px; height: 21px; justify-content: center; background: #f2f2f2; border: 1px solid var(--line); }
.splitter { height: 9px; border: solid var(--line); border-width: 1px 0; display: flex; justify-content: center; align-items: center; }
.splitter i { width: 45px; height: 4px; background: repeating-linear-gradient(110deg, #5c8ccb 0 2px, #fff 2px 3px, transparent 3px 5px); }
.modules { flex: 1; display: flex; flex-direction: column; font: bold 14px/20px var(--ui); }
.modules a { flex: 1; display: flex; align-items: center; gap: 6px; padding-left: 4px; border-bottom: 1px solid var(--line); color: #0c0c14; }
.modules a.on { background: var(--gold); border-bottom-color: #f0a560; }
.modules svg { width: 31px; height: 31px; }
.side-foot { height: 40px; display: flex; align-items: center; justify-content: flex-end; gap: 4px; padding-right: 5px; }
.side-foot button { margin-left: 4px; }

/* main pane */
.main { flex: 1; min-width: 0; display: flex; flex-direction: column; border: solid var(--line); border-width: 0 0 1px 1px; }
.tabs { height: 35px; display: flex; align-items: flex-end; border-bottom: 1px solid var(--line); white-space: nowrap; }
.tabs a { height: 30px; line-height: 30px; padding: 0 11px; }
.tabs a:first-child, .tabs a:nth-child(2) { margin-right: 8px; }
.tabs a.on { background: var(--gold); border: 1px solid var(--line); border-bottom: 0; font-weight: bold; padding: 0 7px; margin: 0; }
.gear { width: 48px; height: 30px; margin: 0 4px 0 auto; padding-left: 1px; gap: 8px; border: 1px solid var(--line); border-bottom: 0; }
.gear svg { width: 21px; height: 21px; }
.gear .caret { border-top-color: #1d4f9e; }
.period { height: 53px; display: flex; align-items: center; gap: 17px; padding-left: 11px; }
.period select { appearance: none; width: 182px; height: 27px; padding: 0 6px; font: inherit; background: #fff; border: 1px solid var(--line); border-right: 18px solid var(--gold); }

/* data grids */
.grid { width: 100%; table-layout: fixed; border-spacing: 0; background: #fff; border: 1px solid var(--line); border-top: 0; }
.grid th { height: 26px; padding: 0; font-weight: normal; background: var(--bar); border: solid var(--line); border-width: 1px 1px 1px 0; white-space: nowrap; overflow: hidden; }
.grid th div { display: flex; align-items: center; padding-right: 1px; }
.grid th span { flex: 1; min-width: 0; overflow: hidden; }
.grid th svg { width: 14px; height: 12px; margin-left: 3px; }
.grid th svg.down { width: 12px; height: 14px; }
.grid td { height: 26px; padding: 0 6px; border: dotted #c6c6c6; border-width: 0 1px 1px 0; white-space: nowrap; }
.grid .filter td { background: #ffffe1; padding: 0; }
.filter i { display: flex; align-items: center; justify-content: center; width: 24px; height: 24px; border-right: 1px dotted #888; font-style: normal; font-weight: bold; font-size: 16px; color: #45457a; }
.box { width: 16px; height: 16px; border: 1px solid #45457a; background: #6a6ad0; box-shadow: inset 0 0 0 3px #fff; }
.grid tr.rest td { height: 8px; border-bottom: 0; }
.grid tfoot td { height: 22px; background: #efefef; border: solid var(--line); border-width: 1px 1px 0 0; }
.grid tfoot .count { background: #d6d6d6; padding: 0 4px; }
.grid tfoot .sum { background: #d6d6d6; text-align: right; padding: 0 5px; }
.grid td.num { text-align: right; padding-right: 5px; }
.lower td, .cost td { height: 27px; }
.grid.lower tr.rest td { height: 18px; }
.grid.result tr.rest td { height: 24px; }

.w104 { width: 104px; } .w117 { width: 117px; } .w125 { width: 125px; } .w129 { width: 129px; }
.w130 { width: 130px; } .w139 { width: 139px; } .w144 { width: 144px; } .w145 { width: 145px; }
.w152 { width: 152px; } .w156 { width: 156px; } .w169 { width: 169px; }
.w170 { width: 170px; } .w176 { width: 176px; } .w185 { width: 185px; } .w195 { width: 195px; }
.w198 { width: 198px; } .w227 { width: 227px; } .w236 { width: 236px; } .w261 { width: 261px; }

.tabs2 { display: flex; height: 24px; margin-top: 10px; }
.tabs2 a { line-height: 22px; padding: 0 21px; border: 1px solid var(--line); border-left: 0; border-bottom: 0; }
.tabs2 a.on { width: 143px; padding: 0; text-align: center; background: var(--gold); font-weight: bold; }
.actions { padding: 10px 10px 9px; }

.btn { height: 32px; justify-content: center; background: var(--bar); border: 1px solid var(--line); white-space: nowrap; }
.btn svg { width: 20px; height: 20px; }
.btn span { flex: 1; text-align: center; }
.btn.excel { width: 170px; height: 30px; padding: 0 8px 0 4px; }

/* status bar */
.status { height: 30px; display: flex; align-items: center; gap: 3px; padding: 3px 0 2px 3px; background: var(--bar); border-top: 1px solid #c3d6ee; white-space: nowrap; }
.status span { height: 25px; display: flex; align-items: center; gap: 4px; padding: 0 3px; border: 1px solid #8aaed8; }
.status svg { width: 17px; height: 19px; }
.st-server { width: 244px; } .st-db { width: 156px; } .st-user { width: 154px; } .st-mini { width: 13px; }
.st-fill { flex: 1; } .st-hot { width: 193px; } .st-ins { width: 41px; } .st-gap { width: 48px; }
.st-time { width: 70px; } .st-date { width: 80px; }

/* taskbar */
.taskbar { height: 52px; display: flex; background: #17100a; color: #fff; font: 15px/24px var(--ui); }
.tb-sys, .tb-apps { display: flex; }
.tb-apps { margin-left: 4px; }
.taskbar button { width: 63px; justify-content: center; position: relative; }
.taskbar button svg { width: 29px; height: 29px; }
.run::after { content: ""; position: absolute; left: 5px; right: 6px; bottom: 0; height: 3px; background: #d9d6d4; }
.run.multi::after { border-right: 11px solid #a3a09e; }
.run.active { background: #4a403b; }
.run.active::after { left: 0; right: 0; }
.tray { margin-left: auto; display: flex; align-items: center; gap: 10px; padding-right: 18px; }
.lang { margin-left: 1px; }
.clock { width: 92px; display: flex; flex-direction: column; align-items: center; margin-left: 3px; }
.action { position: relative; width: 46px; padding-left: 9px; }
.action b { position: absolute; left: 20px; top: 8px; width: 20px; height: 20px; border: 1px solid #888; border-radius: 50%; background: #2b2a29; font-weight: normal; line-height: 18px; text-align: center; }

/* dialog window */
.dialog { position: absolute; left: 449px; top: 137px; width: 1042px; border: 1px solid var(--title); background: var(--pane); box-shadow: 0 0 5px 1px rgba(60, 70, 90, .45); }
.dlg-bar { height: 39px; display: flex; align-items: center; gap: 16px; padding: 0 8px 0 3px; background: var(--title); color: #fff; font: 15px/20px var(--ui); }
.dlg-bar span { flex: 1; }
.dlg-body { padding: 10px 11px 14px 10px; }
.dlg-body h2 { font: bold 26px/34px var(--ui); color: #000; padding-left: 6px; }
.dlg-info { height: 46px; display: flex; align-items: center; padding-left: 3px; white-space: nowrap; }
.dlg-info b { margin-left: 16px; }
.reload { width: 113px; height: 30px; margin-left: auto; }
.dlg-tab { height: 25px; background: var(--gold); border: 1px solid var(--line); border-bottom: 0; font-weight: bold; line-height: 24px; padding-left: 13px; }
.t1 { width: 215px; margin-top: 5px; }
.t2 { width: 160px; }
.cost tbody td:nth-child(-n+2), .cost tbody td:nth-child(7) { background: #e5e5e5; }
.hscroll { height: 24px; display: flex; background: var(--bar); border: 1px solid var(--line); border-top: 0; }
.hscroll button { width: 22px; justify-content: center; }
.hscroll i { width: 290px; background: #d6d6d6; margin-right: auto; }
.hscroll button:last-child { border-left: 1px solid #c3d0dd; }
.dlg-mid { display: flex; justify-content: space-between; align-items: flex-end; height: 47px; }
.alloc { width: 104px; height: 31px; margin-bottom: 8px; }
.grid.result { background: #e5e5e5; }
.grid.result th { height: 52px; }
.dlg-foot { display: flex; gap: 8px; padding-top: 8px; }
.dlg-foot .btn { width: 98px; padding: 0 4px; }
.dlg-foot .help { margin-right: auto; }
.dlg-foot .export { width: 192px; }
.resize { position: absolute; right: 0; bottom: 0; }
```
